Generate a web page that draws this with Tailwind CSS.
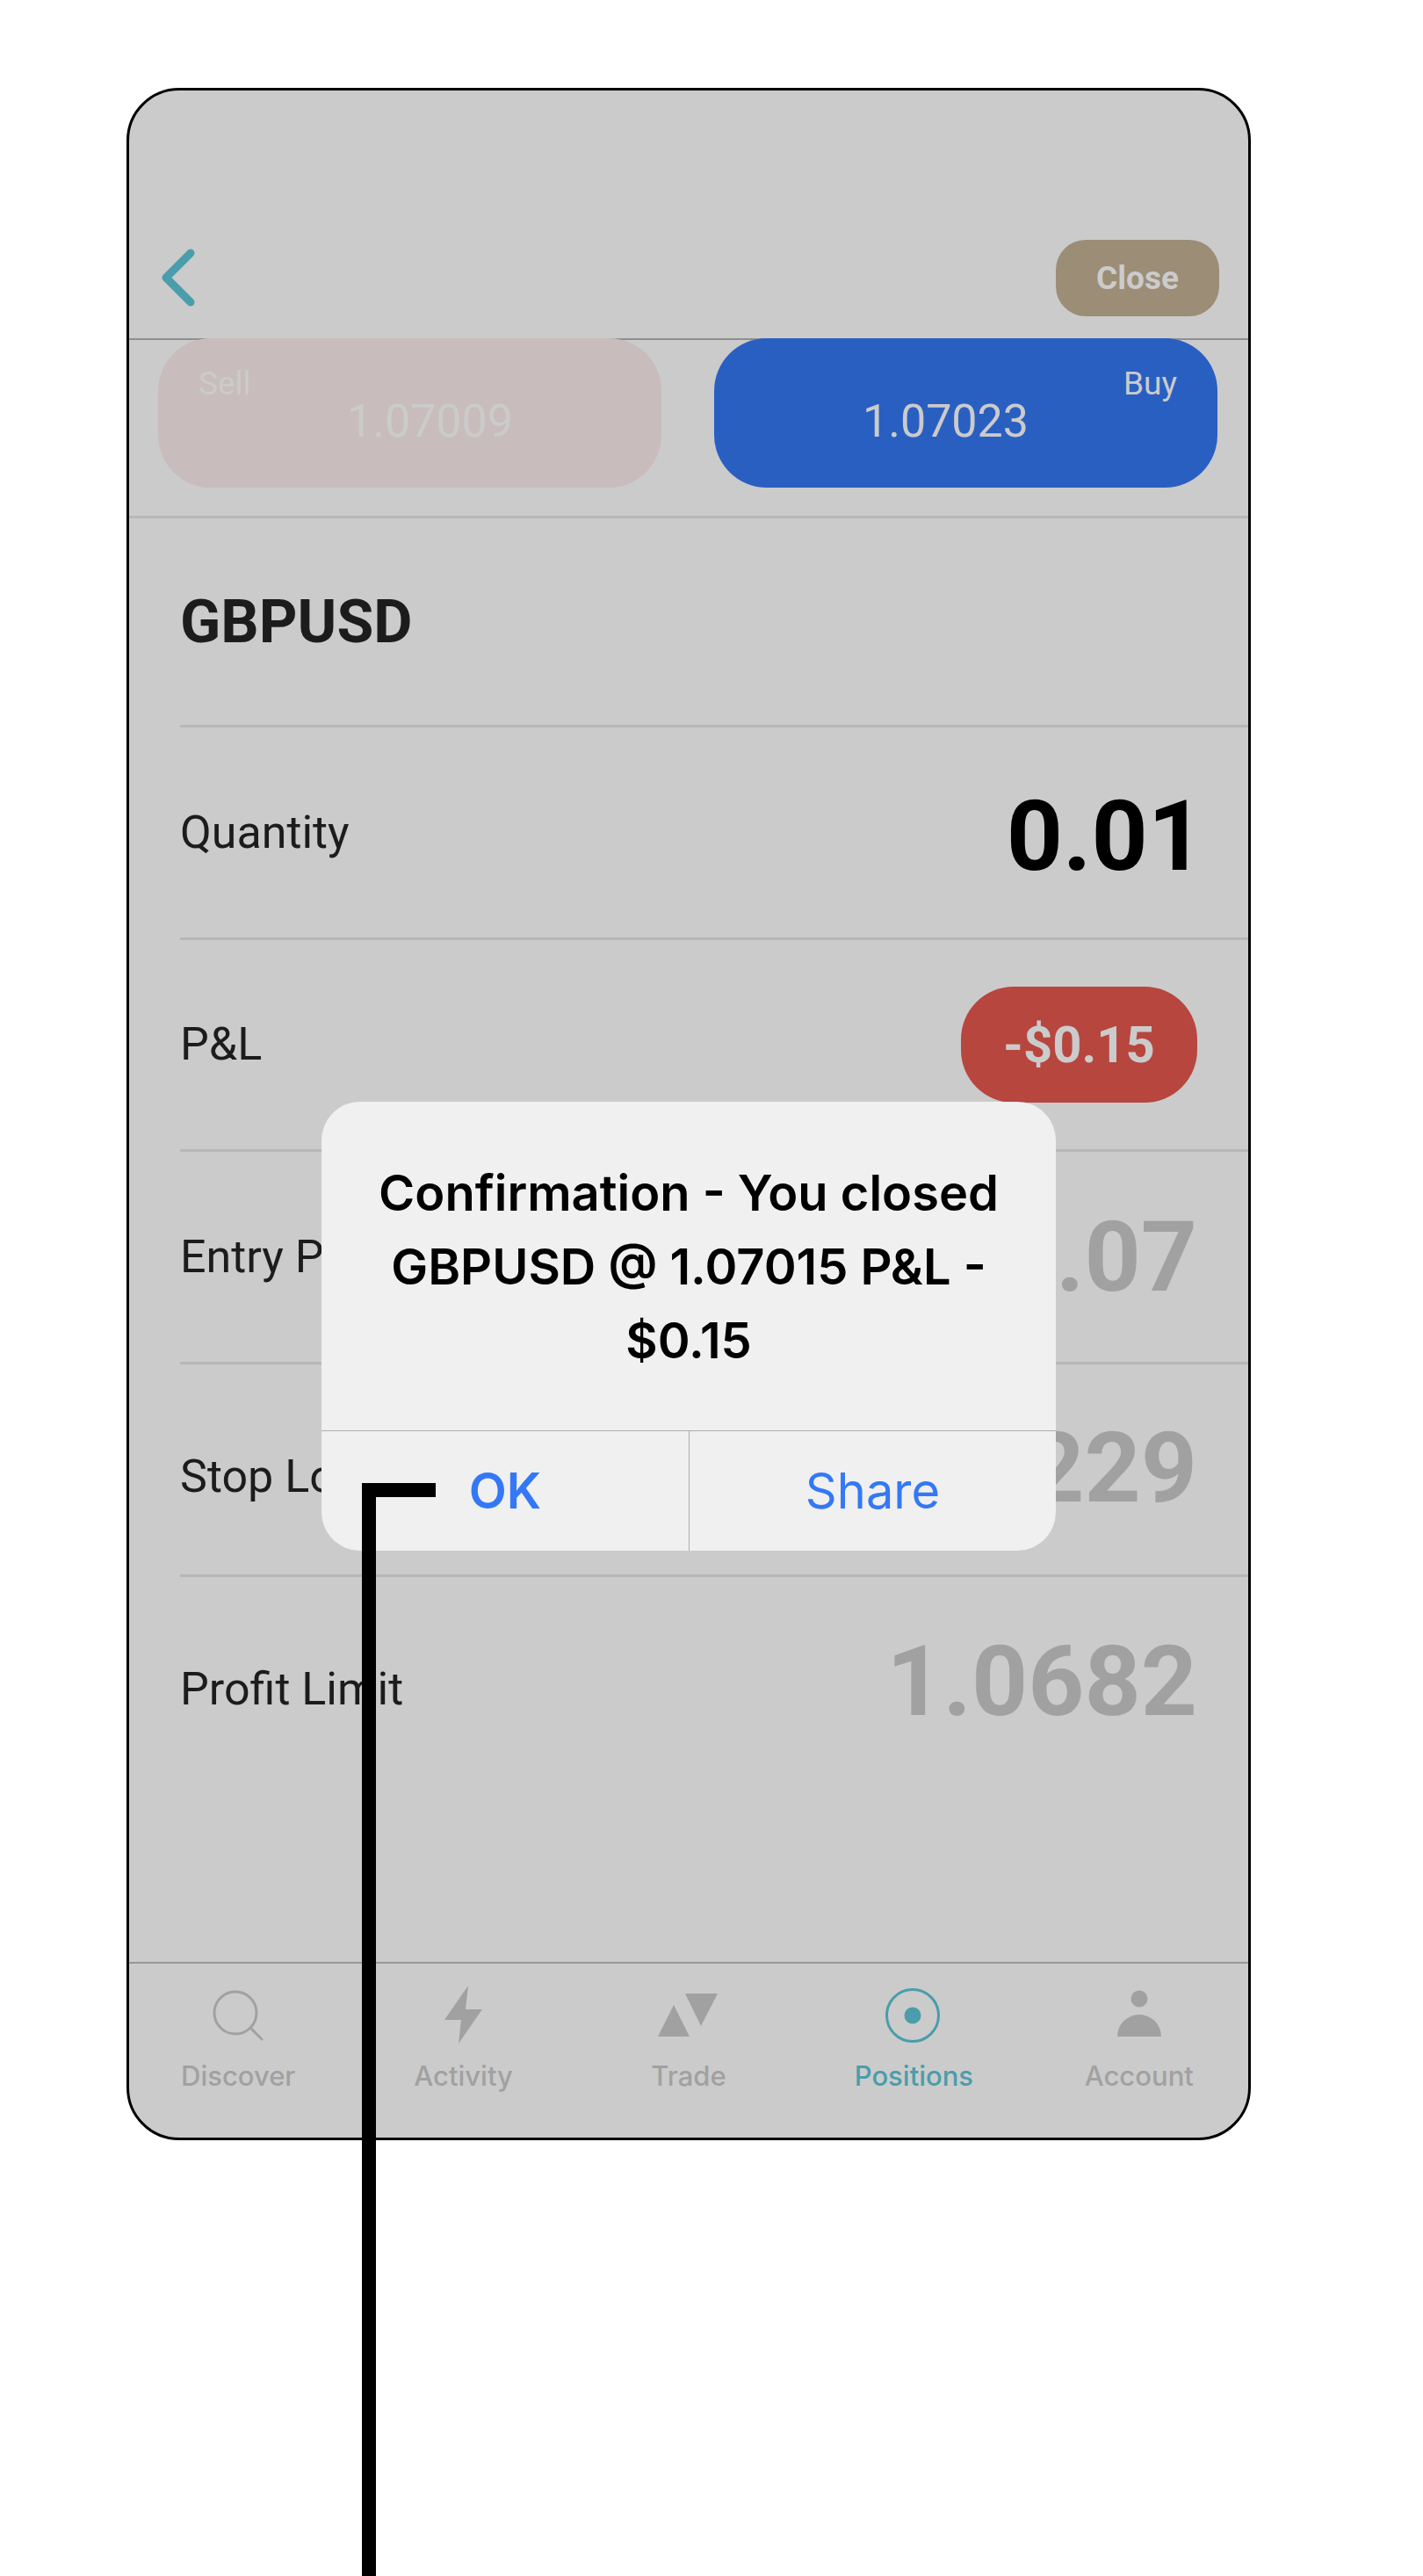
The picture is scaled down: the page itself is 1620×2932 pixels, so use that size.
<!DOCTYPE html>
<html lang="en">
<head>
    <meta charset="UTF-8">
    <meta name="viewport" content="width=device-width, initial-scale=1.0">
    <title>GBPUSD Position</title>
    <script src="https://cdn.jsdelivr.net/npm/@tailwindcss/browser@4"></script>
</head>
<body class="bg-white font-[Roboto,sans-serif]">
    <div class="relative min-h-screen pt-[100px] pl-[144px] pr-[196px] overflow-hidden">

        <!-- Phone screen -->
        <main class="relative border-[3px] border-black rounded-[60px] overflow-hidden bg-[#cbcbcb] text-[#1c1c1c]">

            <!-- Header -->
            <header class="flex items-center justify-between pt-[170px] pb-[25px] pl-9 pr-[33px] border-b-2 border-[#8f8f8f]">
                <button type="button" aria-label="Back">
                    <svg class="w-[40px] h-[68px]" viewBox="0 0 40 68" fill="none" stroke="#4a9dab" stroke-width="9" stroke-linecap="round" stroke-linejoin="round">
                        <path d="M34 5 L6 33 L34 61" />
                    </svg>
                </button>
                <button type="button" class="w-[186px] h-[87px] rounded-[34px] bg-[#9c8d77] text-[#cbcbcb] text-[37px] font-bold">Close</button>
            </header>

            <!-- Sell / Buy -->
            <section class="grid grid-cols-2 gap-[60px] pl-[33px] pr-[35px] pb-8 border-b-[3px] border-[#b7b7b7]">
                <button type="button" class="flex flex-col h-[170px] -mt-[2px] pt-[34px] px-[46px] rounded-[60px] bg-[#c8bcbc] text-[#cbcbcb]">
                    <span class="self-start text-[37px] leading-[36px]">Sell</span>
                    <span class="w-full pl-[46px] text-center text-[52px] leading-[50px]">1.07009</span>
                </button>
                <button type="button" class="flex flex-col h-[170px] -mt-[2px] pt-[34px] px-[46px] rounded-[60px] bg-[#2a5fc2] text-[#cbcbcb]">
                    <span class="self-end text-[37px] leading-[36px]">Buy</span>
                    <span class="w-full pr-[46px] text-center text-[52px] leading-[50px]">1.07023</span>
                </button>
            </section>

            <!-- Position details -->
            <section class="pl-[58px] text-[52px]">
                <div class="flex items-center h-[238px] border-b-[3px] border-[#b7b7b7]">
                    <h1 class="text-[68px] font-bold">GBPUSD</h1>
                </div>
                <div class="flex items-center justify-between h-[242px] pr-[50px] border-b-[3px] border-[#b7b7b7]">
                    <label for="quantity">Quantity</label>
                    <input id="quantity" type="text" value="0.01" class="w-[500px] pt-2 text-right text-[112px] leading-[120px] font-bold text-black">
                </div>
                <div class="flex items-center justify-between h-[241px] pr-[58px] border-b-[3px] border-[#b7b7b7]">
                    <span>P&amp;L</span>
                    <span class="flex items-center justify-center w-[269px] h-[132px] rounded-[60px] bg-[#b7463f] text-[#cbcbcb] text-[58px] font-bold">-$0.15</span>
                </div>
                <div class="flex items-center justify-between h-[242px] pr-[58px] border-b-[3px] border-[#b7b7b7]">
                    <span>Entry Price</span>
                    <span class="text-[112px] leading-[120px] font-bold text-[#a1a1a1]">1.07</span>
                </div>
                <div class="flex items-center justify-between h-[242px] pr-[58px] border-b-[3px] border-[#b7b7b7]">
                    <label for="stop-loss" class="pt-4">Stop Loss</label>
                    <input id="stop-loss" type="text" value="1.07229" class="w-[500px] pb-1 text-right text-[112px] leading-[120px] font-bold text-[#a1a1a1]">
                </div>
                <div class="flex items-center justify-between h-[238px] pr-[58px]">
                    <label for="profit-limit" class="pt-[18px]">Profit Limit</label>
                    <input id="profit-limit" type="text" value="1.0682" class="w-[500px] text-right text-[112px] leading-[120px] font-bold text-[#a1a1a1]">
                </div>
            </section>

            <!-- Tab bar -->
            <nav class="grid grid-cols-5 h-[200px] mt-[200px] pt-5 -mx-1 border-t-2 border-[#989898] font-[Inter,sans-serif] text-[31px] leading-[36px] font-medium text-[#a1a1a1]">
                <a href="#" class="flex flex-col items-center gap-3.5">
                    <svg class="w-[76px] h-[76px]" viewBox="0 0 76 76" fill="none" stroke="currentColor" stroke-width="3" stroke-linecap="round">
                        <circle cx="35" cy="36" r="24" />
                        <path d="M52 53 L65 66" />
                    </svg>
                    Discover
                </a>
                <a href="#" class="flex flex-col items-center gap-3.5">
                    <svg class="w-[76px] h-[76px]" viewBox="0 0 76 76" fill="currentColor">
                        <path d="M43 5 L16 44 H35 L32 71 L59 32 H40 Z" />
                    </svg>
                    Activity
                </a>
                <a href="#" class="flex flex-col items-center gap-3.5">
                    <svg class="w-[76px] h-[76px]" viewBox="0 0 76 76" fill="currentColor">
                        <path d="M21 27 L39 63 H3 Z" />
                        <path d="M34 14 H71 L52 51 Z" />
                    </svg>
                    Trade
                </a>
                <a href="#" class="flex flex-col items-center gap-3.5 text-[#4a9dab]" aria-current="page">
                    <svg class="w-[76px] h-[76px]" viewBox="0 0 76 76">
                        <circle cx="37" cy="39" r="29.5" fill="none" stroke="currentColor" stroke-width="3" />
                        <circle cx="37" cy="39" r="9.5" fill="currentColor" />
                    </svg>
                    Positions
                </a>
                <a href="#" class="flex flex-col items-center gap-3.5">
                    <svg class="w-[76px] h-[76px]" viewBox="0 0 76 76" fill="currentColor">
                        <circle cx="38" cy="20" r="9.5" />
                        <path d="M13 63 A25 25 0 0 1 63 63 Z" />
                    </svg>
                    Account
                </a>
            </nav>

            <!-- Confirmation dialog -->
            <div role="alertdialog" aria-labelledby="dialog-title" class="absolute top-[1151px] left-1/2 -translate-x-1/2 w-[836px] rounded-[44px] overflow-hidden bg-[#f0f0f0] font-[Inter,sans-serif] text-[56px]">
                <h2 id="dialog-title" class="pt-[62px] pb-[60px] text-center leading-[84px] font-semibold text-black">
                    Confirmation - You closed<br>GBPUSD @ 1.07015 P&amp;L -<br>$0.15
                </h2>
                <div class="grid grid-cols-2 h-[137px] border-t border-[#adadad] text-[#3478f6]">
                    <button type="button" class="font-semibold">OK</button>
                    <button type="button" class="border-l border-[#adadad]">Share</button>
                </div>
            </div>
        </main>

        <!-- Callout line -->
        <div class="absolute top-[1688px] bottom-0 left-[412px] w-[84px] border-t-[16px] border-black">
            <div class="w-4 h-full bg-black"></div>
        </div>
    </div>
</body>
</html>
